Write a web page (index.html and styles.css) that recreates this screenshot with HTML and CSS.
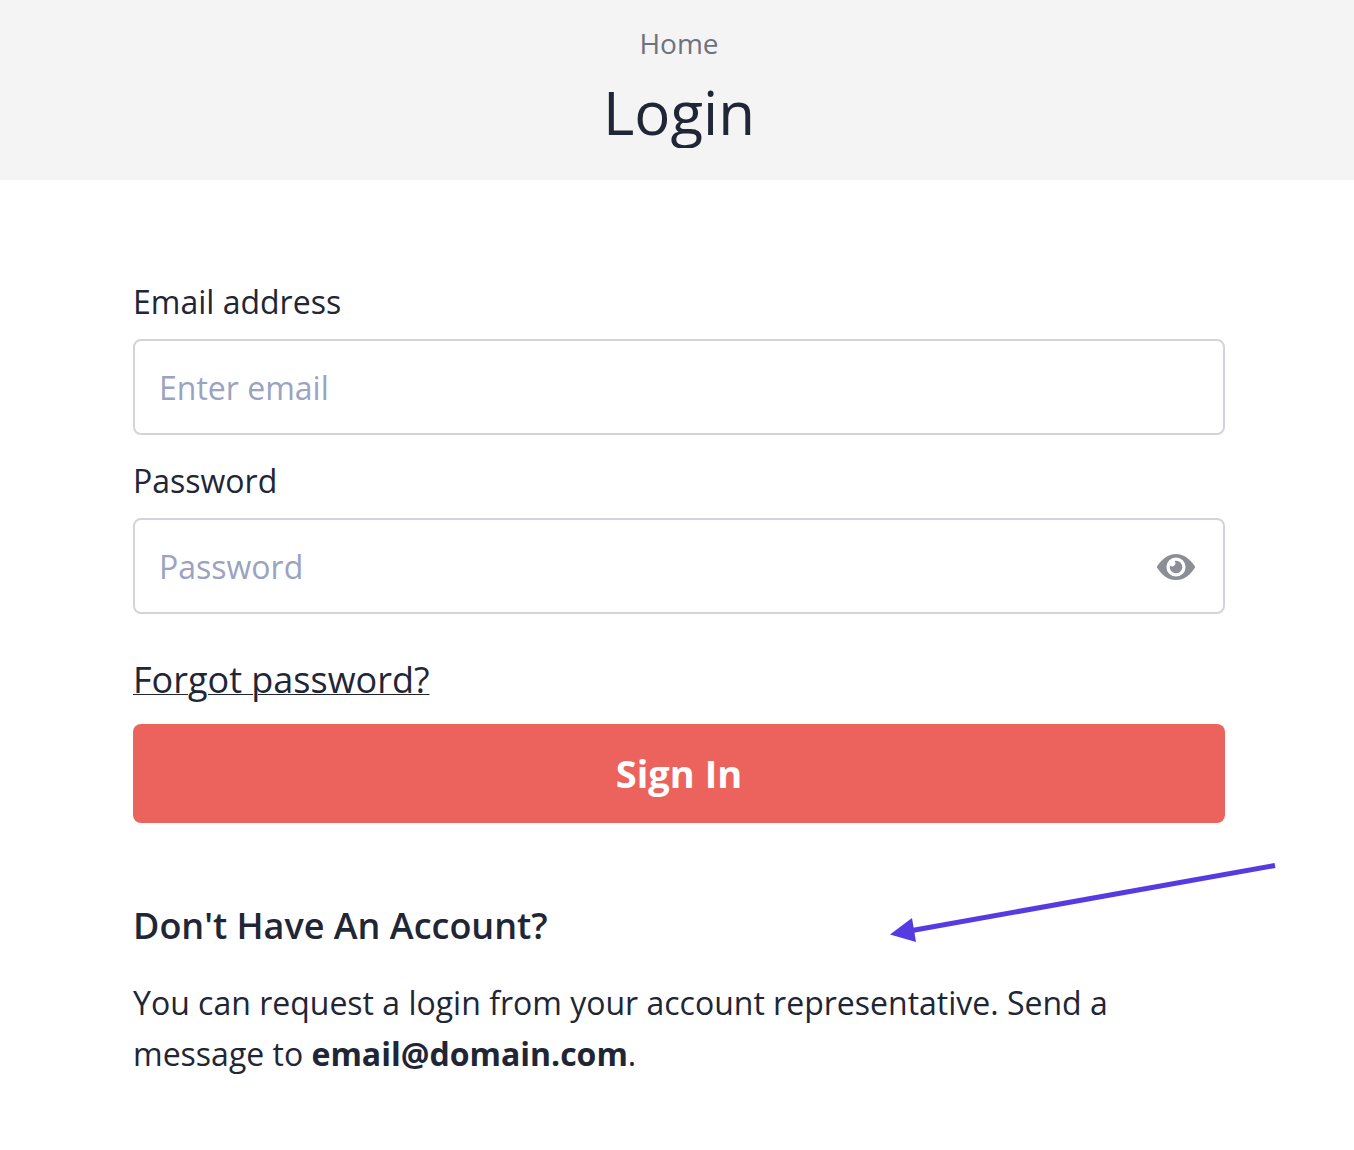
FILE: index.html
```
<!DOCTYPE html>
<html lang="en">
<head>
<meta charset="utf-8">
<meta name="viewport" content="width=device-width, initial-scale=1">
<title>Login</title>
<link rel="stylesheet" href="styles.css">
</head>
<body>
<header class="banner">
  <nav aria-label="Breadcrumb"><a class="crumb" href="#">Home</a></nav>
  <h1 class="title">Login</h1>
</header>
<main class="content">
  <form class="form">
    <div class="field">
      <label class="label" for="email">Email address</label>
      <input class="input" id="email" type="email" placeholder="Enter email">
    </div>
    <div class="field">
      <label class="label" for="password">Password</label>
      <div class="control">
        <input class="input" id="password" type="password" placeholder="Password">
        <button class="reveal" type="button" aria-label="Show password">
          <svg class="eye" viewBox="0 0 38 26" aria-hidden="true"><path fill="currentColor" fill-rule="evenodd" d="M.3 12.1C5 5 11 0 19 0S33 5 37.700 12.100Q38.300 13 37.700 13.900C33 21 27 26 19 26S5 21 .3 13.900Q-.3 13 .3 12.100ZM19 3.400a9.600 9.600 0 1 0 0 19.200a9.600 9.600 0 1 0 0-19.200Z"/><path fill="currentColor" d="M19 6.700a6.300 6.300 0 1 1-6.100 4.800a3.100 3.100 0 0 0 4.500-4.500A6.300 6.300 0 0 1 19 6.700Z"/></svg>
        </button>
      </div>
    </div>
    <a class="forgot" href="#">Forgot password?</a>
    <button class="submit" type="submit">Sign In</button>
  </form>
  <section class="signup">
    <h2 class="subtitle">Don't Have An Account?</h2>
    <p class="text">You can request a login from your account representative. Send a message to <strong>email@domain.com</strong>.</p>
    <svg class="arrow" viewBox="0 0 386 82" aria-hidden="true"><path d="M385 4.500L22 69.500" fill="none" stroke="#563be2" stroke-width="5"/><path d="M0 73.500L22 57L26 81Z" fill="#563be2"/></svg>
  </section>
</main>
</body>
</html>
```
FILE: styles.css
```
* {
  box-sizing: border-box;
}

body {
  margin: 0;
  background: #fff;
  color: #212636;
  font-family: "Open Sans", "Noto Sans", sans-serif;
  font-size: 32px;
  line-height: 51px;
}

.banner {
  display: flex;
  flex-direction: column;
  align-items: center;
  padding: 23px 0 32px 4px;
  background: #f4f4f4;
}

.banner nav {
  display: flex;
}

.crumb {
  color: #6f727c;
  font-size: 28px;
  line-height: 40px;
  text-decoration: none;
}

.title {
  margin: 13px 0 0;
  overflow: hidden;
  font-size: 60px;
  font-weight: 400;
  line-height: 72px;
}

.content {
  padding: 96px 129px 64px 133px;
}

.form {
  display: flex;
  flex-direction: column;
}

.field {
  display: flex;
  flex-direction: column;
  gap: 12px;
  margin-bottom: 20px;
}

.label {
  line-height: 51px;
}

.input {
  width: 100%;
  height: 96px;
  padding: 0 24px;
  border: 2px solid #d1d5d9;
  border-radius: 8px;
  background: #fff;
  color: inherit;
  font: inherit;
}

.input::placeholder {
  color: #9aa3c1;
  opacity: 1;
}

.control {
  position: relative;
}

.reveal {
  position: absolute;
  top: 2px;
  right: 30px;
  bottom: 0;
  display: flex;
  align-items: center;
  padding: 0;
  border: 0;
  background: none;
  color: #8b8e97;
}

.eye {
  width: 38px;
}

.forgot {
  align-self: flex-start;
  margin-top: 20px;
  color: inherit;
  font-size: 36px;
  text-decoration-thickness: 1px;
}

.submit {
  height: 99px;
  margin-top: 19px;
  padding: 0;
  border: 0;
  border-radius: 8px;
  background: #ec635d;
  color: #fff;
  font: inherit;
  font-size: 38px;
  font-weight: 700;
}

.signup {
  position: relative;
  margin-top: 76px;
}

.subtitle {
  margin: 0;
  font-size: 36px;
  font-weight: 600;
  line-height: 54px;
}

.text {
  margin: 24px 0 0;
}

.arrow {
  position: absolute;
  top: -38px;
  right: -51px;
  width: 386px;
}
```
